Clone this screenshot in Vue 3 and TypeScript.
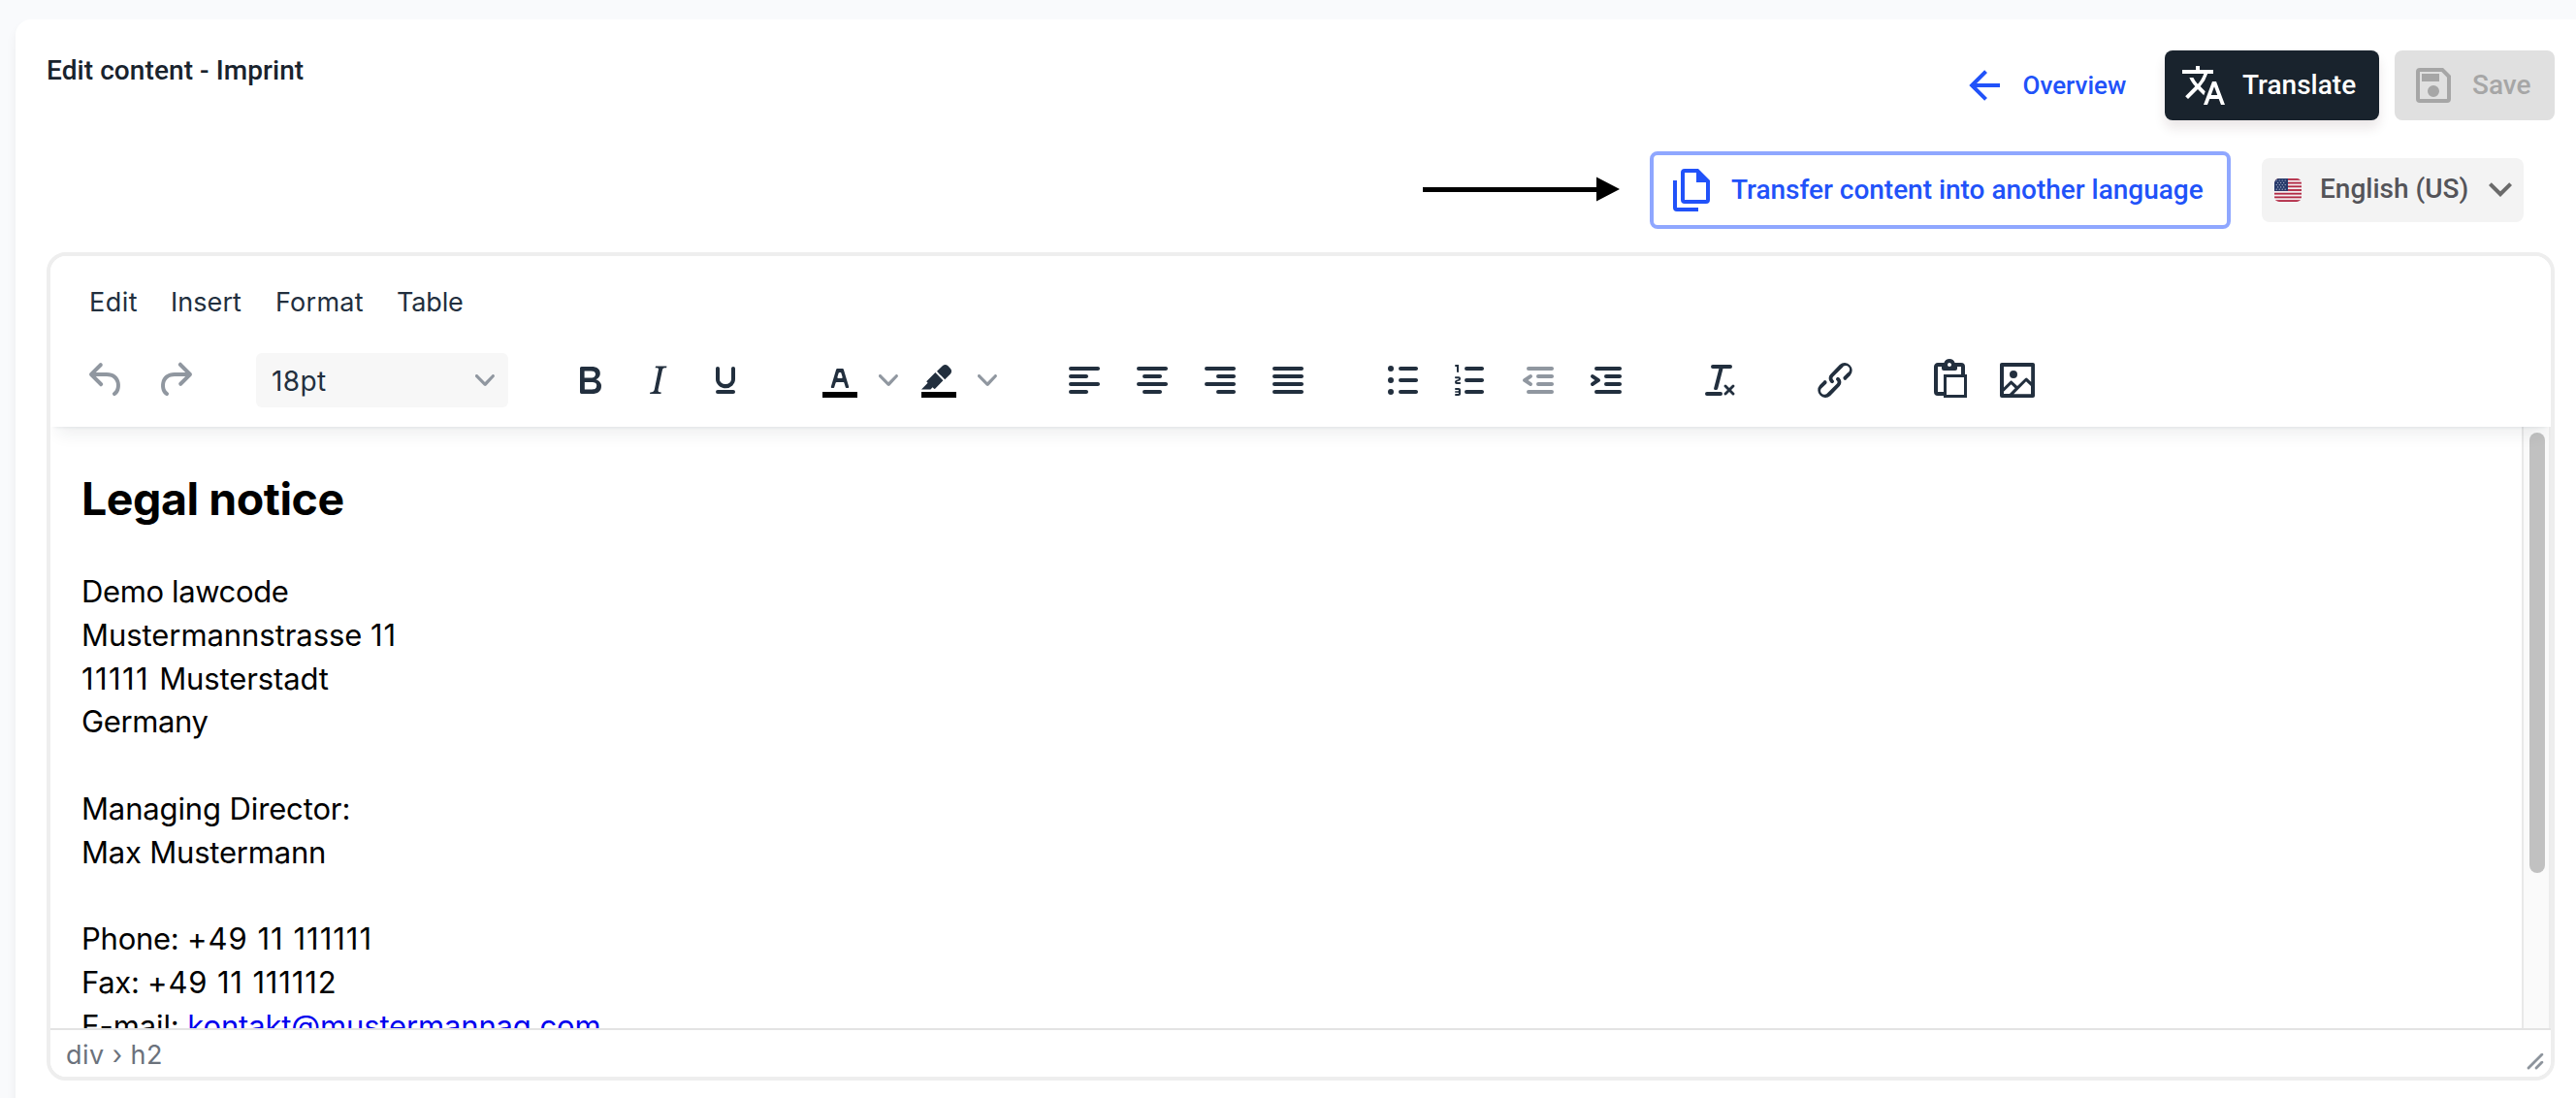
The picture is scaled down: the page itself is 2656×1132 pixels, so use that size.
<script setup lang="ts">
interface TextItem {
  text: string
  spacing: number
  width?: number
}

interface Tool {
  name: string
  path: string
  gap: number
  muted?: boolean
  swatch?: boolean
  menu?: boolean
}

const menus: TextItem[] = [
  { text: 'Edit', spacing: 0.45, width: 84 },
  { text: 'Insert', spacing: 0.05, width: 108 },
  { text: 'Format', spacing: 0.25, width: 125 },
  { text: 'Table', spacing: -0.15, width: 80 },
]

const history: Tool[] = [
  {
    name: 'undo',
    gap: 22,
    muted: true,
    path: 'M6.4 8H12c3.7 0 6.2 2 6.8 5.1.6 2.7-.4 5.6-2.3 6.8a1 1 0 01-1-1.8c1.1-.6 1.8-2.7 1.4-4.6-.5-2.1-2.1-3.5-4.9-3.5H6.4l3.3 3.3a1 1 0 11-1.4 1.4l-5-5a1 1 0 010-1.4l5-5a1 1 0 011.4 1.4L6.4 8z',
  },
  {
    name: 'redo',
    gap: 60,
    muted: true,
    path: 'M17.6 10H12c-2.8 0-4.4 1.4-4.9 3.5-.4 2 .3 4 1.4 4.6a1 1 0 11-1 1.8c-2-1.2-2.9-4.1-2.3-6.8.6-3 3-5.1 6.8-5.1h5.6l-3.3-3.3a1 1 0 111.4-1.4l5 5a1 1 0 010 1.4l-5 5a1 1 0 01-1.4-1.4l3.3-3.3z',
  },
]

const tools: Tool[] = [
  {
    name: 'bold',
    gap: 22,
    path: 'M7.8 19c-.3 0-.5 0-.6-.2l-.2-.5V5.7c0-.2 0-.4.2-.5l.6-.2h5c1.5 0 2.7.3 3.5 1 .7.6 1.1 1.4 1.1 2.5a3 3 0 01-.6 1.9c-.4.6-1 1-1.6 1.2.4.1.9.3 1.3.6s.8.7 1 1.2c.4.4.5 1 .5 1.6 0 1.3-.4 2.3-1.3 3-.8.7-2.1 1-3.8 1H7.8zm5-8.3c.6 0 1.2-.1 1.6-.5.4-.3.6-.7.6-1.3 0-1.1-.8-1.7-2.3-1.7H9.3v3.5h3.4zm.5 6c.7 0 1.3-.1 1.7-.4.4-.4.6-.9.6-1.5s-.2-1-.7-1.4c-.4-.3-1-.4-2-.4H9.4v3.8h4z',
  },
  {
    name: 'italic',
    gap: 22,
    path: 'M16.7 4.7l-.1.9h-.3c-.6 0-1 0-1.4.3-.3.3-.4.6-.5 1.1l-2.1 9.8v.6c0 .5.4.8 1.4.8h.2l-.2.8H8l.2-.8h.2c1.1 0 1.8-.5 2-1.5l2-9.8.1-.5c0-.6-.4-.8-1.4-.8h-.3l.2-.9h5.8z',
  },
  {
    name: 'underline',
    gap: 70,
    path: 'M16 5c.6 0 1 .4 1 1v5.5a4 4 0 01-.4 1.8l-1 1.4a5.3 5.3 0 01-5.5 1 5 5 0 01-1.6-1c-.5-.4-.8-.9-1.1-1.4a4 4 0 01-.4-1.8V6c0-.6.4-1 1-1s1 .4 1 1v5.5c0 .3 0 .6.2 1l.6.7a3.3 3.3 0 002.2.8 3.4 3.4 0 002.2-.8c.3-.2.4-.5.6-.8l.2-.9V6c0-.6.4-1 1-1zM8 17h8c.6 0 1 .4 1 1s-.4 1-1 1H8a1 1 0 010-2z',
  },
  {
    name: 'text-color',
    gap: 18,
    swatch: true,
    menu: true,
    path: 'M8.7 16h-.8a.5.5 0 01-.5-.6l2.7-9c.1-.3.3-.4.5-.4h2.8c.2 0 .4.1.5.4l2.7 9a.5.5 0 01-.5.6h-.8a.5.5 0 01-.4-.4l-.7-2.2c0-.3-.3-.4-.5-.4h-3.4c-.2 0-.4.1-.5.4l-.7 2.2c0 .3-.2.4-.4.4zm2.6-7.6l-.6 2a.5.5 0 00.5.6h1.6a.5.5 0 00.5-.6l-.6-2c0-.3-.3-.4-.5-.4h-.4c-.2 0-.4.1-.5.4z',
  },
  {
    name: 'highlight',
    gap: 66,
    swatch: true,
    menu: true,
    path: 'M7.7 16.7H3l3.3-3.3-.7-.8L10.2 8l4 4.1-4 4.2c-.2.2-.6.2-.8 0l-.6-.7-1.1 1.1zm5-7.5L11 7.4l3-2.9a2 2 0 012.6 0L18 6c.7.7.7 2 0 2.7l-2.9 2.9-1.8-1.8-.5-.6z',
  },
  {
    name: 'align-left',
    gap: 22,
    path: 'M5 5h14c.6 0 1 .4 1 1s-.4 1-1 1H5a1 1 0 110-2zm0 4h8c.6 0 1 .4 1 1s-.4 1-1 1H5a1 1 0 110-2zm0 8h8c.6 0 1 .4 1 1s-.4 1-1 1H5a1 1 0 010-2zm0-4h14c.6 0 1 .4 1 1s-.4 1-1 1H5a1 1 0 010-2z',
  },
  {
    name: 'align-center',
    gap: 22,
    path: 'M5 5h14c.6 0 1 .4 1 1s-.4 1-1 1H5a1 1 0 110-2zm3 4h8c.6 0 1 .4 1 1s-.4 1-1 1H8a1 1 0 110-2zm0 8h8c.6 0 1 .4 1 1s-.4 1-1 1H8a1 1 0 010-2zm-3-4h14c.6 0 1 .4 1 1s-.4 1-1 1H5a1 1 0 010-2z',
  },
  {
    name: 'align-right',
    gap: 22,
    path: 'M5 5h14c.6 0 1 .4 1 1s-.4 1-1 1H5a1 1 0 110-2zm6 4h8c.6 0 1 .4 1 1s-.4 1-1 1h-8a1 1 0 010-2zm0 8h8c.6 0 1 .4 1 1s-.4 1-1 1h-8a1 1 0 010-2zm-6-4h14c.6 0 1 .4 1 1s-.4 1-1 1H5a1 1 0 010-2z',
  },
  {
    name: 'align-justify',
    gap: 70,
    path: 'M5 5h14c.6 0 1 .4 1 1s-.4 1-1 1H5a1 1 0 110-2zm0 4h14c.6 0 1 .4 1 1s-.4 1-1 1H5a1 1 0 110-2zm0 4h14c.6 0 1 .4 1 1s-.4 1-1 1H5a1 1 0 010-2zm0 4h14c.6 0 1 .4 1 1s-.4 1-1 1H5a1 1 0 010-2z',
  },
  {
    name: 'bullet-list',
    gap: 22,
    path: 'M11 5h8c.6 0 1 .4 1 1s-.4 1-1 1h-8a1 1 0 010-2zm0 6h8c.6 0 1 .4 1 1s-.4 1-1 1h-8a1 1 0 010-2zm0 6h8c.6 0 1 .4 1 1s-.4 1-1 1h-8a1 1 0 010-2zM6 4.5a1.5 1.5 0 110 3 1.5 1.5 0 010-3zm0 6a1.5 1.5 0 110 3 1.5 1.5 0 010-3zm0 6a1.5 1.5 0 110 3 1.5 1.5 0 010-3z',
  },
  {
    name: 'numbered-list',
    gap: 22,
    path: 'M10 17h8c.6 0 1 .4 1 1s-.4 1-1 1h-8a1 1 0 010-2zm0-6h8c.6 0 1 .4 1 1s-.4 1-1 1h-8a1 1 0 010-2zm0-6h8c.6 0 1 .4 1 1s-.4 1-1 1h-8a1 1 0 110-2zM6 4v3.5c0 .3-.2.5-.5.5a.5.5 0 01-.5-.5V5h-.5a.5.5 0 010-1H6zm-1 8.8l.2.2h1.3c.3 0 .5.2.5.5s-.2.5-.5.5H4.9a1 1 0 01-.9-1V13c0-.4.3-.8.6-1l1.2-.4.2-.3a.2.2 0 00-.2-.2H4.5a.5.5 0 01-.5-.5c0-.3.2-.5.5-.5h1.6c.5 0 .9.4.9 1v.1c0 .4-.3.8-.6 1l-1.2.4-.2.3zM7 17v2c0 .6-.4 1-1 1H4.5a.5.5 0 010-1h1.2c.2 0 .3-.1.3-.3 0-.2-.1-.3-.3-.3H4.4a.4.4 0 110-.8h1.3c.2 0 .3-.1.3-.3 0-.2-.1-.3-.3-.3H4.5a.5.5 0 110-1H6c.6 0 1 .4 1 1z',
  },
  {
    name: 'outdent',
    gap: 22,
    muted: true,
    path: 'M7 5h12c.6 0 1 .4 1 1s-.4 1-1 1H7a1 1 0 110-2zm5 4h7c.6 0 1 .4 1 1s-.4 1-1 1h-7a1 1 0 010-2zm0 4h7c.6 0 1 .4 1 1s-.4 1-1 1h-7a1 1 0 010-2zm-5 4h12a1 1 0 010 2H7a1 1 0 010-2zm1.6-3.8a1 1 0 01-1.2 1.6l-3-2a1 1 0 010-1.6l3-2a1 1 0 011.2 1.6L6.8 12l1.8 1.2z',
  },
  {
    name: 'indent',
    gap: 70,
    path: 'M7 5h12c.6 0 1 .4 1 1s-.4 1-1 1H7a1 1 0 110-2zm5 4h7c.6 0 1 .4 1 1s-.4 1-1 1h-7a1 1 0 010-2zm0 4h7c.6 0 1 .4 1 1s-.4 1-1 1h-7a1 1 0 010-2zm-5 4h12a1 1 0 010 2H7a1 1 0 010-2zm-2.6-3.8L6.2 12l-1.8-1.2a1 1 0 011.2-1.6l3 2a1 1 0 010 1.6l-3 2a1 1 0 11-1.2-1.6z',
  },
  {
    name: 'clear-formatting',
    gap: 70,
    path: 'M13.2 6a1 1 0 010 .2l-2.6 10a1 1 0 01-1 .8h-.2a.8.8 0 01-.8-1l2.6-10H8a1 1 0 110-2h9a1 1 0 010 2h-3.8zM5 18h7a1 1 0 010 2H5a1 1 0 010-2zm13 1.5L16.5 18 15 19.5a.7.7 0 01-1-1l1.5-1.5-1.5-1.5a.7.7 0 011-1l1.5 1.5 1.5-1.5a.7.7 0 011 1L17.5 17l1.5 1.5a.7.7 0 01-1 1z',
  },
  {
    name: 'link',
    gap: 70,
    path: 'M6.2 12.3a1 1 0 011.4 1.4l-2.1 2a2 2 0 102.7 2.8l4.8-4.8a1 1 0 000-1.4 1 1 0 111.4-1.3 2.9 2.9 0 010 4L9.6 20a3.9 3.9 0 01-5.5-5.5l2-2zm11.6-.6a1 1 0 01-1.4-1.4l2-2a2 2 0 10-2.6-2.8L11 10.3a1 1 0 000 1.4A1 1 0 119.6 13a2.9 2.9 0 010-4L14.4 4a3.9 3.9 0 015.5 5.5l-2 2z',
  },
  {
    name: 'paste',
    gap: 22,
    path: 'M18 9V5h-2v1c0 .6-.4 1-1 1H9a1 1 0 01-1-1V5H6v13h3V9h9zM9 20H6a2 2 0 01-2-2V5c0-1.1.9-2 2-2h3.2A3 3 0 0112 1a3 3 0 012.8 2H18a2 2 0 012 2v4h1v12H9v-1zm1.5-9.5v9h9v-9h-9zM12 3a1 1 0 00-1 1c0 .5.4 1 1 1s1-.5 1-1-.4-1-1-1z',
  },
  {
    name: 'image',
    gap: 0,
    path: 'M5 15.7l3.3-3.2c.3-.3.7-.3 1 0L12 15l4.1-4c.3-.4.8-.4 1 0l2 1.9V5H5v10.7zM5 18V19h3l2.8-2.9-2-2L5 17.9zm14-3l-2.5-2.4-6.4 6.5H19v-4zM4 3h16c.6 0 1 .4 1 1v16c0 .6-.4 1-1 1H4a1 1 0 01-1-1V4c0-.6.4-1 1-1zm6 8a2 2 0 100-4 2 2 0 000 4z',
  },
]

// Each line is a list of runs; letters and digits carry their own tracking.
const paragraphs: TextItem[][][] = [
  [
    [{ text: 'Demo lawcode', spacing: -0.38 }],
    [{ text: 'Mustermannstrasse ', spacing: -0.06 }, { text: '11', spacing: 0.8 }],
    [{ text: '11111 ', spacing: 1.4 }, { text: 'Musterstadt', spacing: -0.12 }],
    [{ text: 'Germany', spacing: -0.4 }],
  ],
  [
    [{ text: 'Managing Director:', spacing: -0.13 }],
    [{ text: 'Max Mustermann', spacing: -0.2 }],
  ],
  [
    [{ text: 'Phone: ', spacing: -0.25 }, { text: '+49 11 111111', spacing: 1 }],
    [{ text: 'Fax: ', spacing: -0.3 }, { text: '+49 11 111112', spacing: 0.85 }],
  ],
]

const stars: [number, number][] = []
for (let r = 0; r < 5; r++) {
  for (let c = 0; c < (r % 2 ? 3 : 4); c++) stars.push([2.2 + c * 3 + (r % 2 ? 1.5 : 0), 2 + r * 2.3])
}
</script>

<template>
  <div class="page">
    <main class="card">
      <header class="head">
        <h1 class="title">Edit content - Imprint</h1>
        <div class="actions">
          <button class="btn overview">
            <svg class="i48" viewBox="0 0 24 24"><path d="M20 11v2H8l5.5 5.5-1.42 1.42L4.16 12l7.92-7.92L13.5 5.5 8 11h12z" /></svg>
            <span>Overview</span>
          </button>
          <button class="btn translate">
            <svg class="i48" viewBox="0 0 24 24"><path d="M12.87 15.07l-2.54-2.51.03-.03A17.52 17.52 0 0014.07 6H17V4h-7V2H8v2H1v2h11.17C11.5 7.92 10.44 9.75 9 11.35 8.07 10.32 7.3 9.19 6.69 8h-2c.73 1.63 1.73 3.17 2.98 4.56l-5.09 5.02L4 19l5-5 3.11 3.11.76-2.04zM18.5 10h-2L12 22h2l1.12-3h4.75L21 22h2l-4.5-12zm-2.62 7l1.62-4.33L19.12 17h-3.24z" /></svg>
            <span>Translate</span>
          </button>
          <button class="btn save">
            <svg class="i48" viewBox="0 0 24 24"><path d="M17 3H5a2 2 0 00-2 2v14a2 2 0 002 2h14a2 2 0 002-2V7l-4-4zm2 16H5V5h11.17L19 7.83V19zm-7-7a3 3 0 100 6 3 3 0 000-6zM6 6h9v4H6V6z" /></svg>
            <span>Save</span>
          </button>
        </div>
      </header>

      <div class="language-row">
        <svg class="pointer" viewBox="0 0 203 26"><path d="M0 11h179V.5L203 13l-24 12.5V16H0z" /></svg>
        <button class="transfer">
          <svg class="pages" viewBox="0 0 19 22"><path fill-rule="evenodd" d="M13 0H6a2 2 0 00-2 2v14a2 2 0 002 2h11a2 2 0 002-2V6l-6-6zM6 16V2h6v5h5v9H6zM0 6v14a2 2 0 002 2h11v-2H2V6H0z" /></svg>
          <span>Transfer content into another language</span>
        </button>
        <div class="select">
          <svg class="flag" viewBox="0 0 28 24">
            <defs><clipPath id="flag-shape"><rect width="28" height="24" rx="5" /></clipPath></defs>
            <g clip-path="url(#flag-shape)">
              <rect width="28" height="24" fill="#f3eef0" />
              <rect v-for="n in 7" :key="n" :y="(n - 1) * 3.692" width="28" height="1.846" fill="#b22a45" />
              <rect width="14" height="12.9" fill="#263a6b" />
              <circle v-for="(s, n) in stars" :key="'s' + n" :cx="s[0]" :cy="s[1]" r=".6" fill="#c5cbdc" />
            </g>
          </svg>
          <span class="lang">English (US)</span>
          <svg class="i48" viewBox="0 0 24 24"><path d="M7.41 8.58L12 13.17l4.59-4.59L18 10l-6 6-6-6 1.41-1.42z" /></svg>
        </div>
      </div>

      <section class="editor">
        <div class="bars">
          <nav class="menubar">
            <span v-for="m in menus" :key="m.text" :style="{ width: m.width + 'px', letterSpacing: m.spacing + 'px' }">{{ m.text }}</span>
          </nav>
          <div class="toolbar">
            <svg v-for="t in history" :key="t.name" class="i48" :class="{ muted: t.muted }" :style="{ marginRight: t.gap + 'px' }" viewBox="0 0 24 24"><path :d="t.path" /></svg>
            <div class="size">
              <span>18pt</span>
              <svg class="chev" viewBox="0 0 10 10"><path d="M8.7 2.2c.3-.3.8-.3 1 0 .4.4.4.9 0 1.2L5.7 7.8c-.3.3-.9.3-1.2 0L.2 3.4a.8.8 0 010-1.2c.3-.3.8-.3 1.1 0L5 6l3.7-3.8z" /></svg>
            </div>
            <div v-for="t in tools" :key="t.name" class="tool" :style="{ marginRight: t.gap + 'px' }">
              <svg class="i48" :class="{ muted: t.muted }" viewBox="0 0 24 24">
                <path :d="t.path" />
                <path v-if="t.swatch" d="M3 18h18v3H3z" fill="#000" />
              </svg>
              <svg v-if="t.menu" class="chev" viewBox="0 0 10 10"><path d="M8.7 2.2c.3-.3.8-.3 1 0 .4.4.4.9 0 1.2L5.7 7.8c-.3.3-.9.3-1.2 0L.2 3.4a.8.8 0 010-1.2c.3-.3.8-.3 1.1 0L5 6l3.7-3.8z" /></svg>
            </div>
          </div>
        </div>

        <div class="body">
          <article class="content">
            <h2>Legal notice</h2>
            <p v-for="(p, i) in paragraphs" :key="i">
              <span v-for="(l, j) in p" :key="j" class="line"><span v-for="r in l" :key="r.text" :style="{ letterSpacing: r.spacing + 'px' }">{{ r.text }}</span></span>
              <span v-if="i === 2" class="line mail">E-mail: <a href="#">kontakt@mustermannag.com</a></span>
            </p>
          </article>
          <div class="scroll"><div class="thumb"></div></div>
        </div>

        <footer class="status">
          <span>div › h2</span>
          <svg class="grip" viewBox="0 0 10 10"><path d="M8.1 1.1A.5.5 0 119 2l-7 7A.5.5 0 111 8l7-7zM8.1 5.1A.5.5 0 119 6l-3 3A.5.5 0 115 8l3-3z" /></svg>
        </footer>
      </section>
    </main>
  </div>
</template>

<style>
body {
  background: #f9fafc;
}
</style>

<style scoped>
* {
  box-sizing: border-box;
}

.page {
  height: 1132px;
  padding: 20px 0 0 16px;
  overflow: hidden;
  background: #f9fafc;
  font-family: Roboto, sans-serif;
}

.card {
  height: 1200px;
  padding: 32px 22px 0 32px;
  border-radius: 16px 0 0 0;
  background: #fff;
  box-shadow: 0 8px 12px rgba(0, 0, 0, 0.06);
}

svg {
  display: block;
  flex: none;
  fill: currentColor;
}

.i48 {
  width: 48px;
  height: 48px;
}

.head {
  display: flex;
  justify-content: space-between;
  height: 72px;
}

.title {
  margin: 4px 0 0;
  color: #19232d;
  font-size: 28px;
  font-weight: 500;
  line-height: 34px;
  letter-spacing: 0.08px;
  white-space: nowrap;
}

.actions {
  display: flex;
}

button {
  margin: 0;
  border: 0;
  background: none;
  font-family: inherit;
}

.btn {
  display: flex;
  align-items: center;
  height: 72px;
  padding: 0 0 0 16px;
  border-radius: 8px;
  font-size: 28px;
  font-weight: 500;
  line-height: 32px;
  white-space: nowrap;
}

.overview {
  width: 226px;
  color: #2152f9;
  font-size: 26px;
}

.overview span {
  margin-left: 15.5px;
}

.translate {
  width: 221px;
  background: #19232d;
  color: #fff;
  box-shadow: 0 8px 12px rgba(60, 20, 30, 0.1);
}

.translate span {
  margin-left: 16px;
}

.save {
  width: 165px;
  margin-left: 16px;
  background: #e0e0e0;
  color: #a6a6a6;
}

.save span {
  margin-left: 16px;
}

.language-row {
  display: flex;
  align-items: center;
  justify-content: flex-end;
  height: 80px;
  margin-top: 32px;
  padding-right: 32px;
}

.pointer {
  width: 203px;
  height: 26px;
  margin: 0 31px 2px 0;
  color: #000;
}

.transfer {
  display: flex;
  align-items: center;
  width: 599px;
  height: 80px;
  padding: 0 0 0 20px;
  border: 4px solid #8fa7ff;
  border-radius: 8px;
  color: #2152f9;
  font-size: 28px;
  font-weight: 500;
  line-height: 32px;
  white-space: nowrap;
}

.pages {
  width: 38px;
  height: 44px;
  margin-right: 22px;
}

.transfer span {
  letter-spacing: -0.02px;
}

.select {
  display: flex;
  align-items: center;
  width: 270px;
  height: 66px;
  margin-left: 32px;
  padding-left: 13px;
  border-radius: 8px;
  background: #f3f3f3;
  color: #545459;
  font-size: 28px;
  font-weight: 500;
  line-height: 32px;
  white-space: nowrap;
}

.lang {
  padding-bottom: 2px;
}

.flag {
  width: 28px;
  height: 24px;
  margin-right: 19px;
}

.select .i48 {
  margin: 0 0 3px 9px;
  color: #6a6a6a;
}

.editor {
  display: flex;
  flex-direction: column;
  height: 854px;
  margin-top: 24px;
  border: 4px solid #eee;
  border-radius: 20px;
  overflow: hidden;
  font-family: Inter, sans-serif;
}

.bars {
  position: relative;
  z-index: 1;
  height: 176px;
  flex: none;
  background: #fff;
  box-shadow: 0 4px 4px -4px rgba(34, 47, 62, 0.12), 0 16px 16px -8px rgba(34, 47, 62, 0.07);
}

.menubar {
  display: flex;
  height: 80px;
  padding: 31px 0 0 40px;
  color: #222f3e;
  font-size: 27px;
  line-height: 34px;
}

.toolbar {
  display: flex;
  align-items: center;
  height: 96px;
  padding-left: 34px;
  color: #222f3e;
}

.tool {
  display: flex;
  align-items: center;
}

.muted {
  color: #9097a0;
}

.size {
  display: flex;
  align-items: center;
  justify-content: space-between;
  width: 260px;
  height: 56px;
  margin-right: 60px;
  padding: 0 14px 0 16px;
  border-radius: 6px;
  background: #f7f7f7;
  font-size: 28px;
  letter-spacing: 0.4px;
}

.size span {
  padding-top: 2px;
}

.chev {
  width: 20px;
  height: 20px;
  color: #9097a0;
}

.tool .chev {
  margin-left: 16px;
}

.body {
  display: flex;
  height: 620px;
  flex: none;
  overflow: hidden;
}

.content {
  flex: 1;
  padding: 41px 32px 0;
  color: #000;
  font-size: 31px;
  line-height: 44.8px;
}

.content h2 {
  margin: 0 0 40px;
  font-size: 46.5px;
  font-weight: 700;
  line-height: 67px;
  letter-spacing: -0.45px;
}

.content p {
  margin: 0 0 44.8px;
}

.line {
  display: block;
  white-space: pre;
}

.mail {
  letter-spacing: -0.1px;
}

.mail a {
  color: #0000ee;
  letter-spacing: -0.16px;
}

.scroll {
  width: 30px;
  padding: 6px 4px 0 6px;
  border-left: 2px solid #e8e8e8;
  border-right: 2px solid #ededed;
  background: #fafafa;
}

.thumb {
  width: 16px;
  height: 454px;
  border-radius: 8px;
  background: #c1c1c1;
}

.status {
  display: flex;
  justify-content: space-between;
  height: 50px;
  padding: 8px 6px 0 16px;
  border-top: 2px solid #e3e3e3;
  background: #fff;
  color: #6b727c;
  font-size: 27px;
  line-height: 36px;
  letter-spacing: 0.45px;
}

.grip {
  width: 20px;
  height: 20px;
  margin-top: 14px;
  color: #8d949c;
}
</style>
